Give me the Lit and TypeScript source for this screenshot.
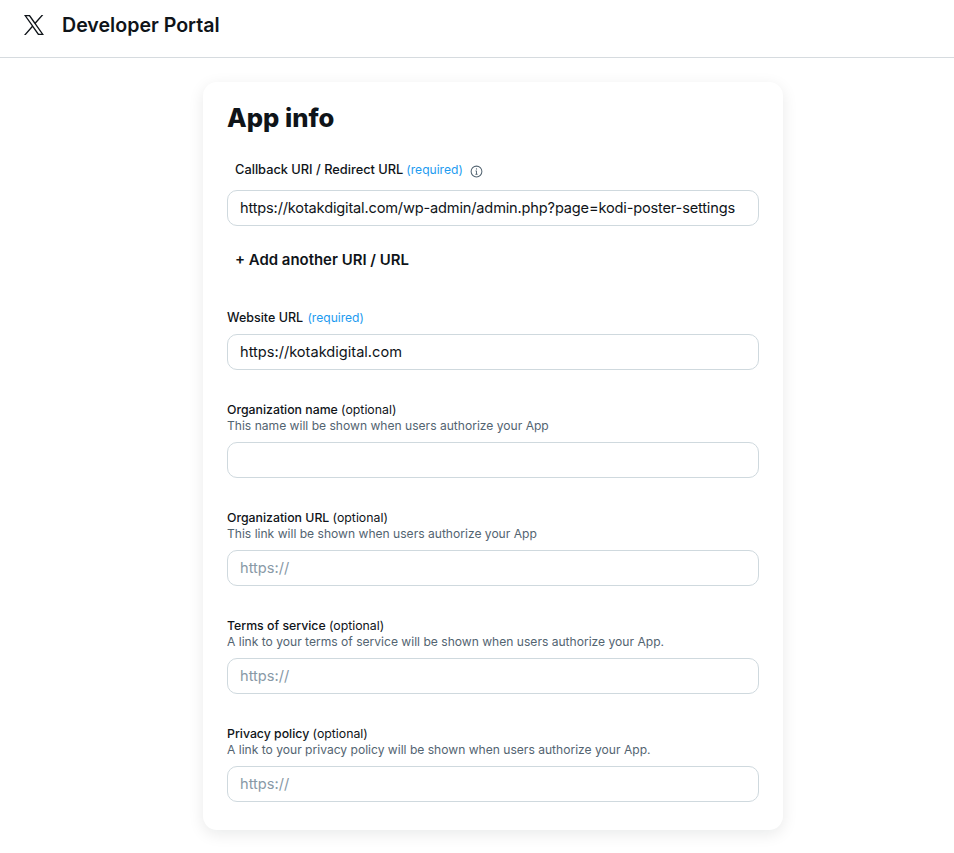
import { LitElement, html, css } from "lit";
import { customElement } from "lit/decorators.js";

@customElement("app-root")
export class AppRoot extends LitElement {
  static styles = css`
    :host { display: block; background: #fff; color: #0f1419; font-family: Inter, "Noto Sans", sans-serif; min-height: 853px; }
    * { box-sizing: border-box; }
    .top { height: 58px; border-bottom: 1px solid #d6dbdf; display: flex; align-items: center; padding: 0 0 7px 24px; gap: 18px; }
    .top svg { width: 20px; height: 20px; display: block; }
    .brand { font-size: 19.6px; font-weight: 600; color: #0f1419; line-height: 24px; }
    .main { display: flex; justify-content: flex-start; padding: 24px 171px 0 203px; }
    .card { width: 580px; height: 748px; background: #fff; border-radius: 14px; box-shadow: 0 4px 16px rgba(15, 20, 25, 0.09); padding: 20px 24px 0; display: flex; flex-direction: column; }
    h1 { margin: 0; font-size: 25.6px; line-height: 32px; font-weight: 800; }
    .cb-label { display: flex; align-items: center; margin: 25px 0 0 8px; height: 20px; font-size: 12.8px; font-weight: 500; gap: 2px; }
    .req { color: #1d9bf0; font-weight: 400; font-size: 12.1px; margin-left: 1px; }
    .cb-label svg { width: 13px; height: 13px; margin: 5px 0 0 5px; color: #536471; }
    input { display: block; width: 532px; height: 36px; border: 1px solid #cfd9de; border-radius: 10px; padding: 0 12px; font: 400 14.6px Inter, "Noto Sans", sans-serif; color: #0f1419; background: #fff; outline: none; }
    input::placeholder { color: #8899a6; opacity: 1; }
    .cb-input { margin-top: 11px; letter-spacing: -0.17px; }
    .add { margin: 24px 0 0 8px; height: 20px; line-height: 20px; font-size: 14.95px; font-weight: 600; }
    .field { display: flex; flex-direction: column; }
    .lbl { font-size: 12.3px; line-height: 16px; font-weight: 500; }
    .opt { font-weight: 400; }
    .hint { font-size: 12.08px; line-height: 16px; color: #536471; }
    .field input { margin-top: 8px; }
    .w { margin-top: 40px; }
    .w .lbl { font-size: 12.5px; }
    .f { margin-top: 32px; }
  `;

  private field(name: string, opt: string, hint: string, placeholder: string) {
    return html`<div class="field f">
      <div class="lbl">${name} <span class="opt">(${opt})</span></div>
      <div class="hint">${hint}</div>
      <input placeholder=${placeholder} />
    </div>`;
  }

  render() {
    return html`
      <header class="top">
        <svg viewBox="0 0 24 24" fill="#0f1419" aria-hidden="true"><path d="M14.258 10.152 23.176 0h-2.113l-7.747 8.813L7.133 0H0l9.352 13.328L0 23.973h2.113l8.176-9.309 6.531 9.309h7.133zm-2.895 3.293-.949-1.328L2.875 1.56h3.246l6.086 8.523.945 1.328 7.91 11.078h-3.246z"/></svg>
        <span class="brand">Developer Portal</span>
      </header>
      <main class="main">
        <section class="card">
          <h1>App info</h1>
          <div class="cb-label">
            <span>Callback URI / Redirect URL</span> <span class="req">(required)</span>
            <svg viewBox="0 0 14 14" fill="none" stroke="currentColor"><circle cx="7" cy="7" r="5.8" stroke-width="1.1"/><path d="M7 6.3v3.6M5.9 6.4H7M5.8 10h2.4" stroke-width="1"/><circle cx="7" cy="4.2" r=".7" fill="currentColor" stroke="none"/></svg>
          </div>
          <input class="cb-input" .value=${"https://kotakdigital.com/wp-admin/admin.php?page=kodi-poster-settings"} />
          <div class="add">+ Add another URI / URL</div>
          <div class="field w">
            <div class="lbl">Website URL <span class="req">(required)</span></div>
            <input .value=${"https://kotakdigital.com"} />
          </div>
          ${this.field("Organization name", "optional", "This name will be shown when users authorize your App", "")}
          ${this.field("Organization URL", "optional", "This link will be shown when users authorize your App", "https://")}
          ${this.field("Terms of service", "optional", "A link to your terms of service will be shown when users authorize your App.", "https://")}
          ${this.field("Privacy policy", "optional", "A link to your privacy policy will be shown when users authorize your App.", "https://")}
        </section>
      </main>
    `;
  }
}
